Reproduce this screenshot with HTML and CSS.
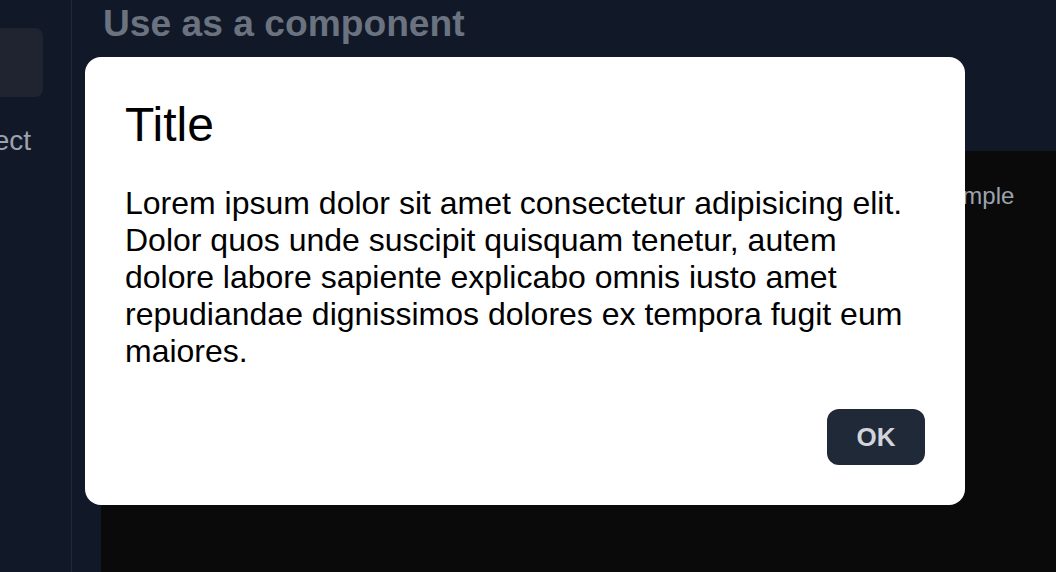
FILE: index.html
```html
<!DOCTYPE html>
<html>
<head>
<meta charset="utf-8">
<link rel="stylesheet" href="styles.css">
</head>
<body>
<div class="page">
  <aside class="sidebar">
    <div class="side-inner">
      <div class="side-box"></div>
      <div class="side-label">Select</div>
    </div>
  </aside>
  <main class="main">
    <h2 class="heading">Use as a component</h2>
    <section class="panel">
      <div class="tabs">
        <span class="tab">Example</span>
        <span class="tab">Code</span>
      </div>
    </section>
  </main>
</div>
<div class="modal">
  <h1 class="modal-title">Title</h1>
  <p class="modal-text">Lorem ipsum dolor sit amet consectetur adipisicing elit. Dolor quos unde suscipit quisquam tenetur, autem dolore labore sapiente explicabo omnis iusto amet repudiandae dignissimos dolores ex tempora fugit eum maiores.</p>
  <div class="modal-actions">
    <button class="ok-btn">OK</button>
  </div>
</div>
</body>
</html>
```
FILE: styles.css
```css
html, body {
  margin: 0;
  padding: 0;
  height: 100%;
  background: #111827;
  font-family: "Liberation Sans", Arial, sans-serif;
  overflow: hidden;
}
.page {
  display: flex;
  height: 100%;
}
.sidebar {
  width: 71px;
  flex: none;
  border-right: 1px solid #1f2937;
  overflow: hidden;
}
.side-inner {
  width: 200px;
  margin-left: -157px;
  padding-top: 28px;
  display: flex;
  flex-direction: column;
  align-items: flex-end;
}
.side-box {
  width: 160px;
  height: 69px;
  border-radius: 8px;
  background: #1f2430;
}
.side-label {
  margin-top: 28px;
  margin-right: 12px;
  font-size: 28px;
  color: #9ca3af;
  line-height: 32px;
}
.main {
  flex: 1;
  padding-left: 29px;
  overflow: hidden;
}
.heading {
  margin: 0 0 0 2px;
  padding-top: 1px;
  font-size: 37.2px;
  line-height: 44px;
  font-weight: bold;
  color: #6b7280;
}
.panel {
  margin-top: 106px;
  width: 1100px;
  height: 440px;
  background: #0a0a0a;
  border-radius: 16px;
}
.tabs {
  display: flex;
  gap: 41px;
  padding-left: 820px;
  padding-top: 31px;
}
.tab {
  font-size: 24px;
  color: #9ca3af;
}
.modal {
  position: fixed;
  left: 85px;
  top: 57px;
  width: 880px;
  box-sizing: border-box;
  padding: 40px;
  background: #ffffff;
  border-radius: 16px;
  color: #000;
}
.modal-title {
  margin: 0;
  font-size: 48px;
  font-weight: normal;
  line-height: 56px;
}
.modal-text {
  margin: 32px 0 0;
  font-size: 32px;
  line-height: 37px;
}
.modal-actions {
  display: flex;
  justify-content: flex-end;
  margin-top: 39px;
}
.ok-btn {
  width: 98px;
  height: 56px;
  padding: 0;
  border: none;
  border-radius: 12px;
  background: #1f2937;
  color: #d1d5db;
  font-family: "Liberation Sans", Arial, sans-serif;
  font-size: 26px;
  font-weight: bold;
}
```
